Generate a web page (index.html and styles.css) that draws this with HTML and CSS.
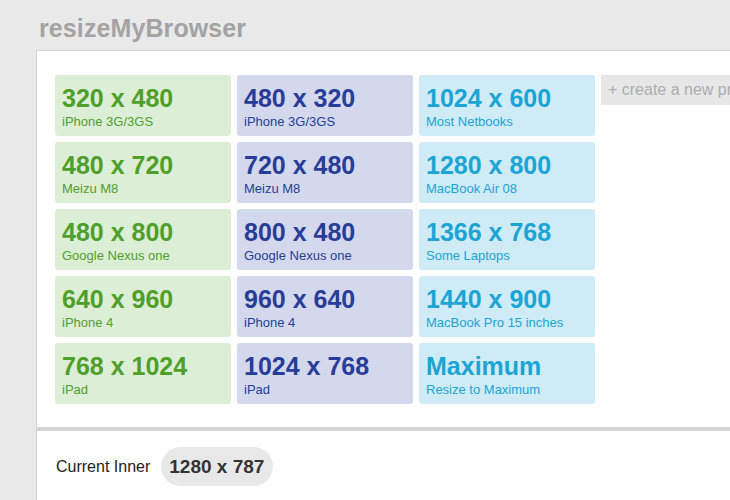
FILE: index.html
```html
<!DOCTYPE html>
<html lang="en">
<head>
<meta charset="utf-8">
<title>resizeMyBrowser</title>
<link rel="stylesheet" href="styles.css">
</head>
<body>
<h1 class="logo">resizeMyBrowser</h1>
<div class="panel presets">
  <div class="grid">
    <div class="tile green"><div class="size">320 x 480</div><div class="name">iPhone 3G/3GS</div></div>
    <div class="tile blue"><div class="size">480 x 320</div><div class="name">iPhone 3G/3GS</div></div>
    <div class="tile cyan"><div class="size">1024 x 600</div><div class="name">Most Netbooks</div></div>
    <div class="create">+ create a new preset</div>

    <div class="tile green"><div class="size">480 x 720</div><div class="name">Meizu M8</div></div>
    <div class="tile blue"><div class="size">720 x 480</div><div class="name">Meizu M8</div></div>
    <div class="tile cyan"><div class="size">1280 x 800</div><div class="name">MacBook Air 08</div></div>
    <div class="spacer"></div>

    <div class="tile green"><div class="size">480 x 800</div><div class="name">Google Nexus one</div></div>
    <div class="tile blue"><div class="size">800 x 480</div><div class="name">Google Nexus one</div></div>
    <div class="tile cyan"><div class="size">1366 x 768</div><div class="name">Some Laptops</div></div>
    <div class="spacer"></div>

    <div class="tile green"><div class="size">640 x 960</div><div class="name">iPhone 4</div></div>
    <div class="tile blue"><div class="size">960 x 640</div><div class="name">iPhone 4</div></div>
    <div class="tile cyan"><div class="size">1440 x 900</div><div class="name">MacBook Pro 15 inches</div></div>
    <div class="spacer"></div>

    <div class="tile green"><div class="size">768 x 1024</div><div class="name">iPad</div></div>
    <div class="tile blue"><div class="size">1024 x 768</div><div class="name">iPad</div></div>
    <div class="tile cyan"><div class="size">Maximum</div><div class="name">Resize to Maximum</div></div>
    <div class="spacer"></div>
  </div>
</div>
<div class="panel current">
  <span class="label">Current Inner</span>
  <span class="pill">1280 x 787</span>
</div>
</body>
</html>
```

FILE: styles.css
```css
html, body {
  margin: 0;
  padding: 0;
  overflow: hidden;
}
body {
  background: #e9e9e9;
  font-family: "Liberation Sans", Arial, sans-serif;
  width: 730px;
  height: 500px;
}
.logo {
  margin: 0 0 7px 0;
  padding: 13px 0 0 39px;
  font-size: 25px;
  line-height: 30px;
  font-weight: bold;
  color: #a3a3a3;
  letter-spacing: 0.1px;
}
.panel {
  margin-left: 36px;
  width: 900px;
  background: #fff;
  border-left: 1px solid #d4d4d4;
}
.presets {
  border-top: 1px solid #d4d4d4;
  padding: 24px 0 23px 18px;
  border-bottom: 4px solid #d5d5d5;
}
.grid {
  display: grid;
  grid-template-columns: 176px 176px 176px 170px;
  grid-auto-rows: 61px;
  gap: 6px;
}
.tile {
  border-radius: 3px;
  padding: 10px 7px 0 7px;
  box-sizing: border-box;
}
.size {
  font-size: 25px;
  line-height: 26px;
  font-weight: bold;
  white-space: nowrap;
}
.name {
  margin-top: 3px;
  font-size: 13px;
  line-height: 15px;
  white-space: nowrap;
}
.green { background: #ddeed6; color: #4f9f2b; }
.blue { background: #d3d8ed; color: #283d98; }
.cyan { background: #ceebf6; color: #1ca4d4; }
.create {
  align-self: start;
  height: 30px;
  line-height: 30px;
  background: #e7e7e7;
  color: #adadad;
  font-size: 16px;
  padding-left: 7px;
  white-space: nowrap;
  overflow: hidden;
}
.current {
  height: 69px;
  padding: 16px 0 0 19px;
  box-sizing: border-box;
  display: flex;
  align-items: flex-start;
}
.label {
  font-size: 16px;
  color: #222;
  line-height: 39px;
}
.pill {
  margin-left: 11px;
  height: 39px;
  line-height: 39px;
  padding: 0 9px 0 8px;
  border-radius: 20px;
  background: #e8e8e8;
  color: #333;
  font-size: 19px;
  font-weight: bold;
}
```
